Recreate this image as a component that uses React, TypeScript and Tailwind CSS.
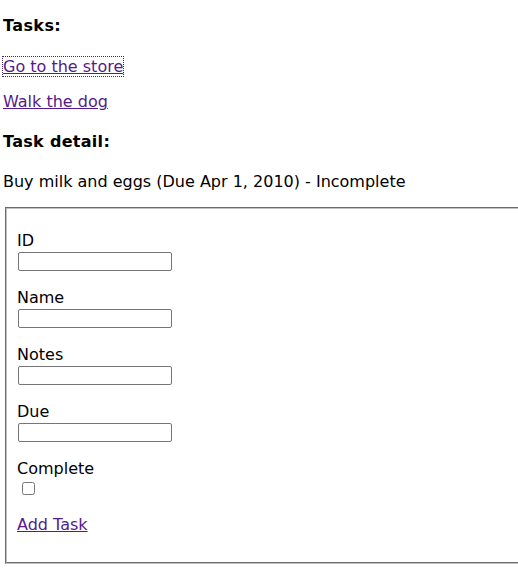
import React from 'react';

const fields = ['ID', 'Name', 'Notes', 'Due'];

function Field({ label }: { label: string }) {
  return (
    <div className="flex flex-col">
      <label className="block leading-[19px]">{label}</label>
      <input
        type="text"
        className="ml-[1px] mt-[2px] block h-[19px] w-[154px] rounded-[2px] border border-[#767676] bg-white px-[2px] text-[13px]"
      />
    </div>
  );
}

export default function App() {
  return (
    <div
      className="min-h-[584px] overflow-hidden bg-white pl-[3px] pt-[16px] text-[16px] leading-[19px] text-black"
      style={{ fontFamily: '"DejaVu Sans", sans-serif' }}
    >
      <div className="font-bold tracking-[0.4px]">Tasks:</div>

      <div className="mt-[22px]">
        <a
          href="#"
          className="text-[#551a8b] underline outline-1 outline-dotted outline-[#3b2a5a]"
        >
          Go to the store
        </a>
      </div>
      <div className="mt-[16px]">
        <a href="#" className="text-[#551a8b] underline">
          Walk the dog
        </a>
      </div>

      <div className="mt-[21px] font-bold tracking-[0.3px]">Task detail:</div>

      <div className="mt-[21px]">Buy milk and eggs (Due Apr 1, 2010) - Incomplete</div>

      <fieldset className="ml-[2px] mt-[16px] w-[560px] border-2 border-[#c0c0c0] px-[10px] pb-[28px] pt-[22px] [border-style:groove]">
        <div className="flex flex-col gap-[17px]">
          {fields.map((f) => (
            <Field key={f} label={f} />
          ))}
          <div className="flex flex-col">
            <label className="block leading-[19px]">Complete</label>
            <div className="h-[19px] pt-[4px]">
              <input type="checkbox" className="ml-[5px] block h-[13px] w-[13px]" />
            </div>
          </div>
        </div>
        <div className="mt-[18px]">
          <a href="#" className="text-[#551a8b] underline">
            Add Task
          </a>
        </div>
      </fieldset>
    </div>
  );
}
